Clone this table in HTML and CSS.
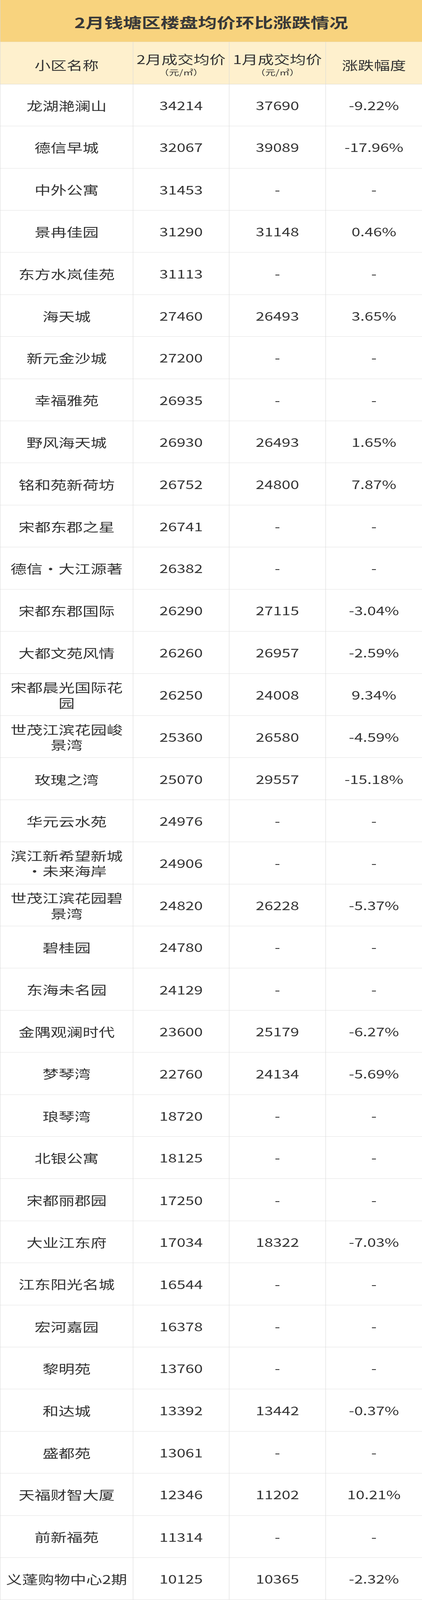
FILE: index.html
```html
<!DOCTYPE html>
<html lang="zh-CN">
<head>
<meta charset="utf-8">
<title>2月钱塘区楼盘均价环比涨跌情况</title>
<link rel="stylesheet" href="styles.css">
</head>
<body>
<div class="table">
  <div class="title">2月钱塘区楼盘均价环比涨跌情况</div>

  <div class="cell head name"><span>小区名称</span></div>
  <div class="cell head"><span class="h1">2月成交均价</span><span class="h2">（元/㎡）</span></div>
  <div class="cell head"><span class="h1">1月成交均价</span><span class="h2">（元/㎡）</span></div>
  <div class="cell head name"><span>涨跌幅度</span></div>

  <div class="cell name"><span>龙湖滟澜山</span></div><div class="cell num">34214</div><div class="cell num">37690</div><div class="cell num">-9.22%</div>
  <div class="cell name"><span>德信早城</span></div><div class="cell num">32067</div><div class="cell num">39089</div><div class="cell num">-17.96%</div>
  <div class="cell name"><span>中外公寓</span></div><div class="cell num">31453</div><div class="cell num">-</div><div class="cell num">-</div>
  <div class="cell name"><span>景冉佳园</span></div><div class="cell num">31290</div><div class="cell num">31148</div><div class="cell num">0.46%</div>
  <div class="cell name"><span>东方水岚佳苑</span></div><div class="cell num">31113</div><div class="cell num">-</div><div class="cell num">-</div>
  <div class="cell name"><span>海天城</span></div><div class="cell num">27460</div><div class="cell num">26493</div><div class="cell num">3.65%</div>
  <div class="cell name"><span>新元金沙城</span></div><div class="cell num">27200</div><div class="cell num">-</div><div class="cell num">-</div>
  <div class="cell name"><span>幸福雅苑</span></div><div class="cell num">26935</div><div class="cell num">-</div><div class="cell num">-</div>
  <div class="cell name"><span>野风海天城</span></div><div class="cell num">26930</div><div class="cell num">26493</div><div class="cell num">1.65%</div>
  <div class="cell name"><span>铭和苑新荷坊</span></div><div class="cell num">26752</div><div class="cell num">24800</div><div class="cell num">7.87%</div>
  <div class="cell name"><span>宋都东郡之星</span></div><div class="cell num">26741</div><div class="cell num">-</div><div class="cell num">-</div>
  <div class="cell name"><span>德信<span class="dot">·</span>大江源著</span></div><div class="cell num">26382</div><div class="cell num">-</div><div class="cell num">-</div>
  <div class="cell name"><span>宋都东郡国际</span></div><div class="cell num">26290</div><div class="cell num">27115</div><div class="cell num">-3.04%</div>
  <div class="cell name"><span>大都文苑风情</span></div><div class="cell num">26260</div><div class="cell num">26957</div><div class="cell num">-2.59%</div>
  <div class="cell name"><span>宋都晨光国际花园</span></div><div class="cell num">26250</div><div class="cell num">24008</div><div class="cell num">9.34%</div>
  <div class="cell name"><span>世茂江滨花园峻景湾</span></div><div class="cell num">25360</div><div class="cell num">26580</div><div class="cell num">-4.59%</div>
  <div class="cell name"><span>玫瑰之湾</span></div><div class="cell num">25070</div><div class="cell num">29557</div><div class="cell num">-15.18%</div>
  <div class="cell name"><span>华元云水苑</span></div><div class="cell num">24976</div><div class="cell num">-</div><div class="cell num">-</div>
  <div class="cell name"><span>滨江新希望新城<span class="dot">·</span>未来海岸</span></div><div class="cell num">24906</div><div class="cell num">-</div><div class="cell num">-</div>
  <div class="cell name"><span>世茂江滨花园碧景湾</span></div><div class="cell num">24820</div><div class="cell num">26228</div><div class="cell num">-5.37%</div>
  <div class="cell name"><span>碧桂园</span></div><div class="cell num">24780</div><div class="cell num">-</div><div class="cell num">-</div>
  <div class="cell name"><span>东海未名园</span></div><div class="cell num">24129</div><div class="cell num">-</div><div class="cell num">-</div>
  <div class="cell name"><span>金隅观澜时代</span></div><div class="cell num">23600</div><div class="cell num">25179</div><div class="cell num">-6.27%</div>
  <div class="cell name"><span>梦琴湾</span></div><div class="cell num">22760</div><div class="cell num">24134</div><div class="cell num">-5.69%</div>
  <div class="cell name"><span>琅琴湾</span></div><div class="cell num">18720</div><div class="cell num">-</div><div class="cell num">-</div>
  <div class="cell name"><span>北银公寓</span></div><div class="cell num">18125</div><div class="cell num">-</div><div class="cell num">-</div>
  <div class="cell name"><span>宋都丽郡园</span></div><div class="cell num">17250</div><div class="cell num">-</div><div class="cell num">-</div>
  <div class="cell name"><span>大业江东府</span></div><div class="cell num">17034</div><div class="cell num">18322</div><div class="cell num">-7.03%</div>
  <div class="cell name"><span>江东阳光名城</span></div><div class="cell num">16544</div><div class="cell num">-</div><div class="cell num">-</div>
  <div class="cell name"><span>宏河嘉园</span></div><div class="cell num">16378</div><div class="cell num">-</div><div class="cell num">-</div>
  <div class="cell name"><span>黎明苑</span></div><div class="cell num">13760</div><div class="cell num">-</div><div class="cell num">-</div>
  <div class="cell name"><span>和达城</span></div><div class="cell num">13392</div><div class="cell num">13442</div><div class="cell num">-0.37%</div>
  <div class="cell name"><span>盛都苑</span></div><div class="cell num">13061</div><div class="cell num">-</div><div class="cell num">-</div>
  <div class="cell name"><span>天福财智大厦</span></div><div class="cell num">12346</div><div class="cell num">11202</div><div class="cell num">10.21%</div>
  <div class="cell name"><span>前新福苑</span></div><div class="cell num">11314</div><div class="cell num">-</div><div class="cell num">-</div>
  <div class="cell name"><span>义蓬购物中心2期</span></div><div class="cell num">10125</div><div class="cell num">10365</div><div class="cell num">-2.32%</div>
</div>
</body>
</html>
```
FILE: styles.css
```css
html, body {
  margin: 0;
  padding: 0;
  background: #ffffff;
}

body {
  font-family: "Noto Sans CJK SC", "Noto Sans", sans-serif;
  color: #333333;
}

.table {
  width: 1080px;
  height: 5374px;
  display: grid;
  grid-template-columns: 340px 246px 247px 247px;
  grid-auto-rows: 141.42px;
  box-sizing: border-box;
  border-left: 1px solid #d9d9d9;
  overflow: hidden;
  transform-origin: 0 0;
}

@media (max-height: 5300px) {
  html, body {
    height: 100%;
    overflow: hidden;
  }
  .table {
    transform: scaleY(0.762188);
  }
}

.title {
  grid-column: 1 / -1;
  background: #f8d37e;
  display: flex;
  align-items: center;
  justify-content: center;
  font-size: 48px;
  font-weight: 700;
  color: #383838;
  border-right: 1px solid #e6c173;
  border-bottom: 1px solid #e2cfa6;
  box-sizing: border-box;
  padding-top: 6px;
}

.cell {
  box-sizing: border-box;
  border-right: 1px solid #d9d9d9;
  border-bottom: 1px solid #d9d9d9;
  display: flex;
  align-items: center;
  justify-content: center;
  text-align: center;
  padding: 0 8px;
  min-width: 0;
  overflow: hidden;
}

.head {
  background: #fef0cd;
  flex-direction: column;
  border-bottom-color: #d6d3cc;
  padding-top: 14px;
}

.name {
  font-size: 41px;
  line-height: 52px;
}

.head.name {
  padding-top: 10px;
}

.num {
  font-size: 40px;
  line-height: 52px;
}

.h1 {
  font-size: 41px;
  line-height: 46px;
  white-space: nowrap;
}

.h2 {
  font-size: 26px;
  line-height: 44px;
  white-space: nowrap;
}

.dot {
  display: inline-block;
  width: 1em;
  text-align: center;
}
```
